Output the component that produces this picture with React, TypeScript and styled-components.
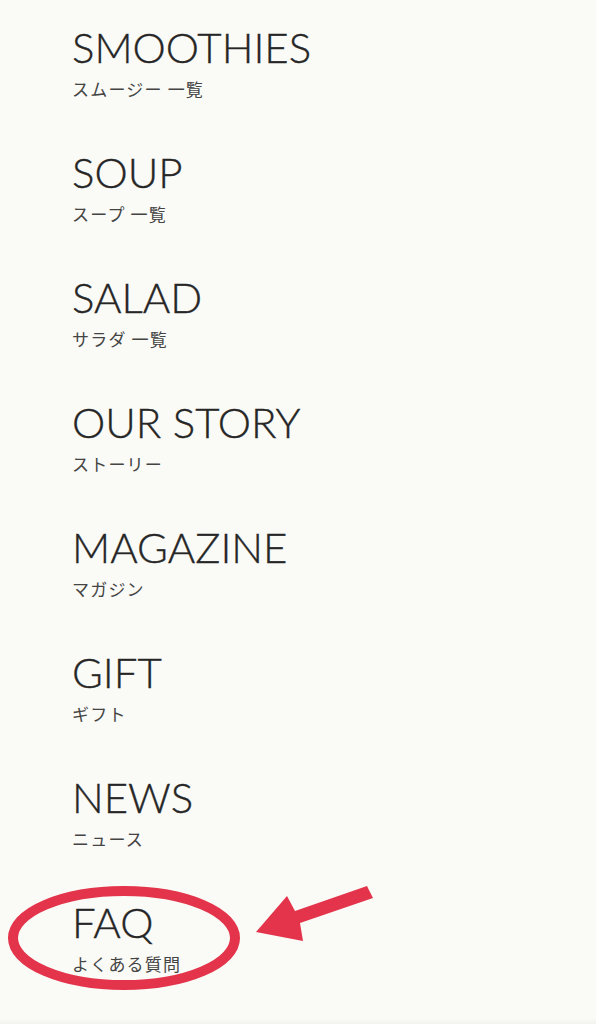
import React from 'react';
import styled, { createGlobalStyle } from 'styled-components';

const GlobalStyle = createGlobalStyle`
  html, body {
    margin: 0;
    padding: 0;
    background: #fafaf6;
  }
  * {
    box-sizing: border-box;
  }
`;

const Page = styled.div`
  position: relative;
  width: 596px;
  height: 1024px;
  overflow: hidden;
  background: #fafaf6;
`;

const Menu = styled.nav`
  display: flex;
  flex-direction: column;
  gap: 50px;
  padding: 26px 0 0 72px;
`;

const Item = styled.a`
  display: flex;
  flex-direction: column;
  color: #333;
  text-decoration: none;
`;

const Title = styled.span`
  font-family: Lato, 'Noto Sans', sans-serif;
  font-weight: 300;
  font-size: 42px;
  line-height: 42px;
  letter-spacing: 0;
  color: #262626;
  -webkit-text-stroke: 0.35px #262626;
`;

const Sub = styled.span`
  margin-top: 9px;
  font-family: 'Noto Sans CJK JP', 'Noto Sans', sans-serif;
  font-size: 17px;
  line-height: 24px;
  letter-spacing: 1.2px;
  color: #444;
`;

const BottomEdge = styled.div`
  position: absolute;
  left: 0;
  right: 0;
  bottom: 0;
  height: 6px;
  background: linear-gradient(to bottom, rgba(0, 0, 0, 0), rgba(0, 0, 0, 0.03));
`;

const Annotation = styled.svg`
  position: absolute;
  left: 0;
  top: 0;
  pointer-events: none;
`;

const items = [
  { en: 'SMOOTHIES', ja: 'スムージー 一覧' },
  { en: 'SOUP', ja: 'スープ 一覧' },
  { en: 'SALAD', ja: 'サラダ 一覧' },
  { en: 'OUR STORY', ja: 'ストーリー' },
  { en: 'MAGAZINE', ja: 'マガジン' },
  { en: 'GIFT', ja: 'ギフト' },
  { en: 'NEWS', ja: 'ニュース' },
  { en: 'FAQ', ja: 'よくある質問' },
];

const RED = '#e3344b';

export default function App() {
  return (
    <Page>
      <GlobalStyle />
      <Menu>
        {items.map((item) => (
          <Item key={item.en} href="#">
            <Title>{item.en}</Title>
            <Sub>{item.ja}</Sub>
          </Item>
        ))}
      </Menu>
      <BottomEdge />
      <Annotation width="596" height="1024" viewBox="0 0 596 1024">
        <ellipse cx="124" cy="938" rx="111" ry="47" fill="none" stroke={RED} strokeWidth="10" />
        <polygon
          points="367,886 373,898 300,923 303,941 256,932 287,896 295,911"
          fill={RED}
        />
      </Annotation>
    </Page>
  );
}
